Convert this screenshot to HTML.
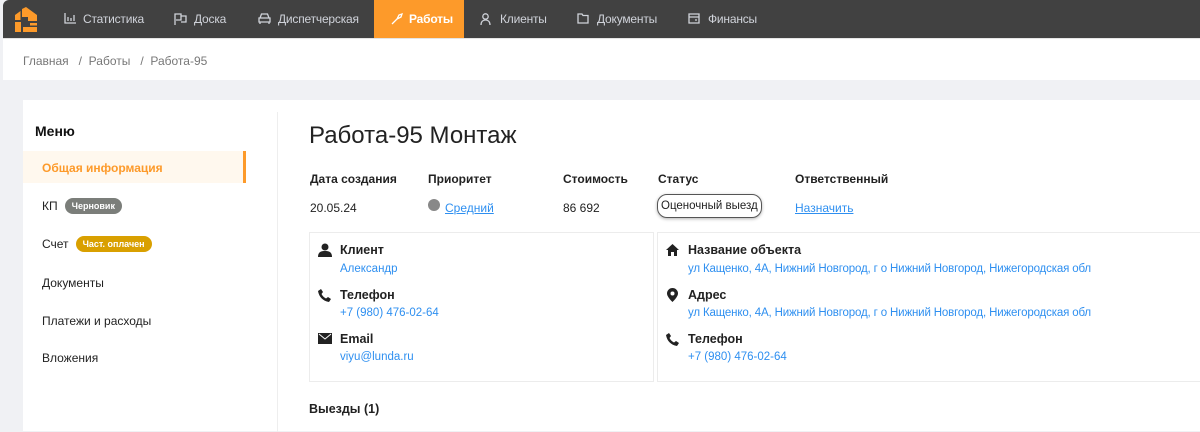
<!DOCTYPE html>
<html><head><meta charset="utf-8"><style>
*{margin:0;padding:0;box-sizing:border-box}
body{width:1200px;height:431px;overflow:hidden;background:#f0f1f4;font-family:"Liberation Sans",sans-serif;position:relative;color:#222}
.nav{position:absolute;left:3px;top:0;width:1197px;height:38px;background:#414141;border-top-left-radius:6px}
.nav .it{position:absolute;top:0;height:38px;color:#d0d3da;font-size:12px;letter-spacing:-0.2px}
.nav .it span{position:absolute;top:12px;white-space:nowrap}
.nav .it svg{position:absolute;top:13px}
.nav .act{background:#fd9a2a;color:#fff}
.crumb{position:absolute;left:3px;top:38px;width:1197px;height:42px;background:#fff;border-top:1px solid #e4e4e4;font-size:12px;color:#777;padding:15px 0 0 20px}
.panel{position:absolute;left:23px;top:100px;width:1177px;height:331px;background:#fff}
.div{position:absolute;left:254px;top:12px;width:1px;height:320px;background:#eee}
.abs{position:absolute}
.mi{position:absolute;left:19px;font-size:12px;color:#222}
.badge{display:inline-block;font-size:9px;font-weight:bold;color:#fff;border-radius:9px;padding:3px 7px;margin-left:7px;vertical-align:1px}
.lbl{position:absolute;font-size:12px;font-weight:bold;color:#222}
.val{position:absolute;font-size:12px;color:#222}
.box{position:absolute;border:1px solid #ececec}
.h{position:absolute;font-size:12.5px;font-weight:bold;color:#222}
.l{position:absolute;font-size:11.5px;color:#2e8ff0}
svg{display:block}
</style></head><body>
<div class="nav">
<svg class="abs" style="left:10px;top:6px" width="26" height="27" viewBox="0 0 26 27"><path d="M13 1 L24 9 V15 H15 V11 H9 V3Z" fill="#fd9a2a"/><path d="M2 9 L7.5 5 V14 H2Z" fill="#fd9a2a"/><path d="M2 16 H8 V26 H2Z" fill="#fd9a2a"/><path d="M10 21 H24 V26 H10Z" fill="#fd9a2a"/><path d="M17 17 H24 V19.5 H17Z" fill="#fd9a2a"/></svg>
<div class="it" style="left:61px"><svg width="12" height="11" viewBox="0 0 12 11" fill="none" stroke="#d0d3da" stroke-width="1.3"><path d="M1 0V10H12M4 8V4M7 8V5M10 8V2"/></svg><span style="left:19px">Статистика</span></div>
<div class="it" style="left:171px"><svg width="13" height="12" viewBox="0 0 13 12" fill="none" stroke="#d0d3da" stroke-width="1.3"><path d="M1 12V1H7V7H2M7 3H12V9H7"/></svg><span style="left:20px">Доска</span></div>
<div class="it" style="left:255px"><svg width="13" height="11" viewBox="0 0 13 11" fill="none" stroke="#d0d3da" stroke-width="1.3"><path d="M2 5L3.5 1H9.5L11 5M1 5H12V9H1ZM2 9V11M11 9V11"/></svg><span style="left:20px">Диспетчерская</span></div>
<div class="it act" style="left:371px;width:90px"><svg style="left:17px" width="12" height="12" viewBox="0 0 12 12" fill="none" stroke="#fff" stroke-width="1.3"><path d="M1 11L6 6M6 6L8 2L11 1L10 4L6 6"/></svg><span style="left:35px;font-weight:bold">Работы</span></div>
<div class="it" style="left:477px"><svg width="11" height="12" viewBox="0 0 11 12" fill="none" stroke="#d0d3da" stroke-width="1.3"><circle cx="5.5" cy="3.5" r="2.7"/><path d="M1 12C1 8.5 3 7 5.5 7S10 8.5 10 12"/></svg><span style="left:20px">Клиенты</span></div>
<div class="it" style="left:574px"><svg width="12" height="11" viewBox="0 0 12 11" fill="none" stroke="#d0d3da" stroke-width="1.3"><path d="M1 1H5L6 2.5H11V10H1Z"/></svg><span style="left:20px">Документы</span></div>
<div class="it" style="left:685px"><svg width="12" height="11" viewBox="0 0 12 11" fill="none" stroke="#d0d3da" stroke-width="1.3"><path d="M1 1H11V10H1ZM1 4H11M7 7H9"/></svg><span style="left:20px">Финансы</span></div>
</div>
<div class="crumb">Главная &nbsp;&nbsp;/&nbsp; Работы &nbsp;&nbsp;/&nbsp; Работа-95</div>
<div class="panel">
<div class="div"></div>
<div class="abs" style="left:12px;top:23px;font-size:14px;font-weight:bold;color:#111">Меню</div>
<div class="abs" style="left:0;top:51px;width:223px;height:32px;background:#fff8ee;border-right:3px solid #fd9a2a"></div>
<div class="mi" style="top:61px;color:#fd9a2a;font-weight:bold">Общая информация</div>
<div class="mi" style="top:98px">КП<span class="badge" style="background:#7b7e7a">Черновик</span></div>
<div class="mi" style="top:136px">Счет<span class="badge" style="background:#d9a000">Част. оплачен</span></div>
<div class="mi" style="top:176px">Документы</div>
<div class="mi" style="top:214px">Платежи и расходы</div>
<div class="mi" style="top:251px">Вложения</div>

<div class="abs" style="left:286px;top:22px;font-size:24px;color:#222">Работа-95 Монтаж</div>
<div class="lbl" style="left:287px;top:72px">Дата создания</div>
<div class="lbl" style="left:405px;top:72px">Приоритет</div>
<div class="lbl" style="left:540px;top:72px">Стоимость</div>
<div class="lbl" style="left:635px;top:72px">Статус</div>
<div class="lbl" style="left:772px;top:72px">Ответственный</div>
<div class="val" style="left:287px;top:101px">20.05.24</div>
<div class="abs" style="left:405px;top:99px;width:12px;height:12px;border-radius:50%;background:#888"></div>
<div class="val" style="left:422px;top:101px;color:#2e8ff0;text-decoration:underline">Средний</div>
<div class="val" style="left:540px;top:101px">86 692</div>
<div class="val" style="left:634px;top:94px;border:1.5px solid #555;border-radius:10px;padding:5px 3px;box-shadow:0 1px 3px rgba(0,0,0,.3);font-size:11.5px">Оценочный выезд</div>
<div class="val" style="left:772px;top:101px;color:#2e8ff0;text-decoration:underline">Назначить</div>

<div class="box" style="left:286px;top:132px;width:345px;height:150px"></div>
<div class="box" style="left:634px;top:132px;width:560px;height:150px"></div>
<svg class="abs" style="left:295px;top:143px" width="14" height="14" viewBox="0 0 14 14"><circle cx="7" cy="4" r="3.5" fill="#222"/><path d="M0 14C0 9 3 8 7 8S14 9 14 14Z" fill="#222"/></svg>
<div class="h" style="left:317px;top:143px">Клиент</div><div class="l" style="left:317px;top:163px">Александр</div>
<svg class="abs" style="left:295px;top:189px" width="13" height="13" viewBox="0 0 13 13"><path d="M3 0L5 3L3.5 5C4.5 7 6 8.5 8 9.5L10 8L13 10L11 13C5 12 1 8 0 2Z" fill="#222"/></svg>
<div class="h" style="left:317px;top:188px">Телефон</div><div class="l" style="left:317px;top:207px">+7 (980) 476-02-64</div>
<svg class="abs" style="left:295px;top:233px" width="14" height="11" viewBox="0 0 14 11"><rect width="14" height="11" fill="#222"/><path d="M1 1L7 6L13 1" stroke="#fff" stroke-width="1" fill="none"/></svg>
<div class="h" style="left:317px;top:232px">Email</div><div class="l" style="left:317px;top:251px">viyu@lunda.ru</div>
<svg class="abs" style="left:643px;top:144px" width="13" height="12" viewBox="0 0 13 12"><path d="M6.5 0L13 6H11V12H8V8H5V12H2V6H0Z" fill="#222"/></svg>
<div class="h" style="left:665px;top:143px">Название объекта</div><div class="l" style="left:665px;top:163px;letter-spacing:-0.15px">ул Кащенко, 4А, Нижний Новгород, г о Нижний Новгород, Нижегородская обл</div>
<svg class="abs" style="left:644px;top:188px" width="11" height="14" viewBox="0 0 11 14"><path d="M5.5 0A5.5 5.5 0 0 1 11 5.5C11 9 5.5 14 5.5 14S0 9 0 5.5A5.5 5.5 0 0 1 5.5 0Z" fill="#222"/><circle cx="5.5" cy="5.5" r="2" fill="#fff"/></svg>
<div class="h" style="left:665px;top:188px">Адрес</div><div class="l" style="left:665px;top:207px;letter-spacing:-0.15px">ул Кащенко, 4А, Нижний Новгород, г о Нижний Новгород, Нижегородская обл</div>
<svg class="abs" style="left:643px;top:233px" width="13" height="13" viewBox="0 0 13 13"><path d="M3 0L5 3L3.5 5C4.5 7 6 8.5 8 9.5L10 8L13 10L11 13C5 12 1 8 0 2Z" fill="#222"/></svg>
<div class="h" style="left:665px;top:232px">Телефон</div><div class="l" style="left:665px;top:251px">+7 (980) 476-02-64</div>
<div class="h" style="left:286px;top:302px">Выезды (1)</div>
</div>
</body></html>
